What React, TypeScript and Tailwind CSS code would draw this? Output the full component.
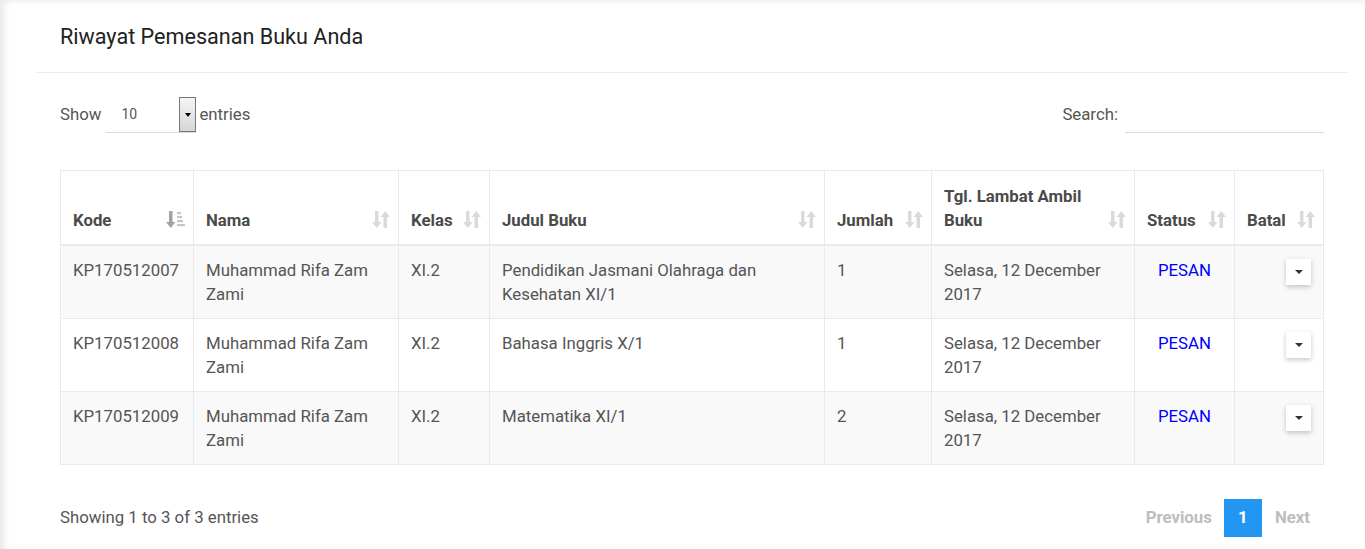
import React from "react";

const rows = [
  { kode: "KP170512007", nama: "Muhammad Rifa Zam Zami", kelas: "XI.2", judul: "Pendidikan Jasmani Olahraga dan Kesehatan XI/1", jumlah: "1", tgl: "Selasa, 12 December 2017" },
  { kode: "KP170512008", nama: "Muhammad Rifa Zam Zami", kelas: "XI.2", judul: "Bahasa Inggris X/1", jumlah: "1", tgl: "Selasa, 12 December 2017" },
  { kode: "KP170512009", nama: "Muhammad Rifa Zam Zami", kelas: "XI.2", judul: "Matematika XI/1", jumlah: "2", tgl: "Selasa, 12 December 2017" },
];

function SortIcon() {
  return (
    <svg width="18" height="19" viewBox="0 0 18 19" className="shrink-0">
      <g fill="#dadada">
        <rect x="3" y="1" width="3.5" height="12" />
        <polygon points="0,12 9.5,12 4.75,18" />
        <rect x="11.5" y="6" width="3.5" height="12" />
        <polygon points="8.5,7 18,7 13.25,1" />
      </g>
    </svg>
  );
}

function SortAscIcon() {
  return (
    <svg width="19" height="19" viewBox="0 0 19 19" className="shrink-0">
      <g fill="#a3a3a3">
        <rect x="3" y="1" width="3.5" height="12" />
        <polygon points="0,12 9.5,12 4.75,18" />
      </g>
      <g fill="#c6c6c6">
        <rect x="11" y="2" width="4" height="2.2" />
        <rect x="11" y="6" width="5" height="2.2" />
        <rect x="11" y="10" width="6" height="2.2" />
        <rect x="11" y="14" width="8" height="2.2" />
      </g>
    </svg>
  );
}

function Th({ label, w, asc }: { label: React.ReactNode; w: string; asc?: boolean }) {
  return (
    <th className={`${w} border-r border-[#e9e9e9] pl-3 pr-[8px] pb-[12px] align-bottom text-left font-bold text-[#4a4a4a] last:border-r-0`}>
      <div className="flex items-end justify-between gap-1">
        <span className="leading-6">{label}</span>
        <span className="mb-[3px]">{asc ? <SortAscIcon /> : <SortIcon />}</span>
      </div>
    </th>
  );
}

const td = "border-r border-[#e9e9e9] px-3 py-3";

export default function App() {
  return (
    <div
      className="min-h-[549px] w-full bg-white text-[16.8px] text-[#555] shadow-[inset_7px_4px_7px_-3px_rgba(0,0,0,0.09)]"
      style={{ fontFamily: "Roboto, 'Liberation Sans', sans-serif" }}
    >
      <div className="pl-[36px] pr-[17px]">
        <div className="flex h-[73px] items-center border-b border-[#ebebeb] px-6 pt-[3px]">
          <h1 className="text-[21.6px] font-normal text-[#222]">Riwayat Pemesanan Buku Anda</h1>
        </div>

        <div className="px-6">
          <div className="mt-[24px] flex h-[36px] items-center justify-between">
            <div className="flex items-center">
              <span>Show</span>
              <div className="ml-[5px] flex h-[36px] w-[90px] items-center border-b border-[#dadada]">
                <span className="ml-[15px] text-[14px] text-[#555]">10</span>
                <span className="ml-auto flex h-[35px] w-[17px] items-center justify-center border border-[#777] bg-gradient-to-b from-[#f5f5f5] to-[#d6d6d6]">
                  <span className="h-0 w-0 border-x-[3.5px] border-t-[4px] border-x-transparent border-t-black" />
                </span>
              </div>
              <span className="ml-[3px]">entries</span>
            </div>
            <div className="flex items-center">
              <span>Search:</span>
              <div className="ml-[7px] h-[36px] w-[199px] border-b border-[#dadada]" />
            </div>
          </div>

          <table className="mt-[37px] w-full table-fixed border-collapse border border-[#e9e9e9]">
            <thead>
              <tr className="h-[74px] border-b-2 border-[#e9e9e9]">
                <Th label="Kode" w="w-[133px]" asc />
                <Th label="Nama" w="w-[205px]" />
                <Th label="Kelas" w="w-[91px]" />
                <Th label="Judul Buku" w="w-[335px]" />
                <Th label="Jumlah" w="w-[107px]" />
                <Th label={<>Tgl. Lambat Ambil<br />Buku</>} w="w-[203px]" />
                <Th label="Status" w="w-[100px]" />
                <Th label="Batal" w="w-[89px]" />
              </tr>
            </thead>
            <tbody>
              {rows.map((r, i) => (
                <tr key={r.kode} className={`border-b border-[#e9e9e9] align-top leading-6 ${i % 2 === 0 ? "bg-[#f9f9f9]" : "bg-white"}`}>
                  <td className={td}>{r.kode}</td>
                  <td className={td}>{r.nama}</td>
                  <td className={td}>{r.kelas}</td>
                  <td className={td}>{r.judul}</td>
                  <td className={td}>{r.jumlah}</td>
                  <td className={td}>{r.tgl}</td>
                  <td className={`${td} text-center text-[#0000ff]`}>PESAN</td>
                  <td className="px-3 py-3">
                    <div className="flex justify-end">
                      <button className="mt-[1px] flex h-[26px] w-[25px] items-center justify-center bg-white shadow-[0_2px_5px_rgba(0,0,0,0.22)]">
                        <span className="h-0 w-0 border-x-[4px] border-t-[4px] border-x-transparent border-t-[#333]" />
                      </button>
                    </div>
                  </td>
                </tr>
              ))}
            </tbody>
          </table>

          <div className="mt-[34px] flex items-center justify-between">
            <span>Showing 1 to 3 of 3 entries</span>
            <div className="flex items-center font-bold text-[#bdbdbd]">
              <span className="px-3">Previous</span>
              <span className="flex h-[38px] w-[38px] items-center justify-center bg-[#2196f3] text-white">1</span>
              <span className="pl-[13px] pr-[14px]">Next</span>
            </div>
          </div>
        </div>
      </div>
    </div>
  );
}
